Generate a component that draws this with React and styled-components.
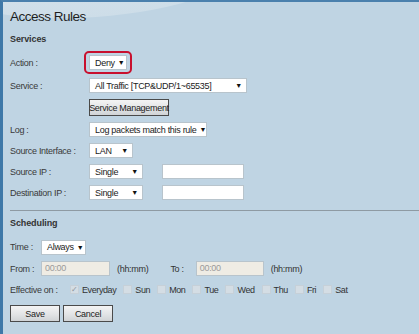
import styled, { createGlobalStyle } from 'styled-components'

const GlobalStyle = createGlobalStyle`
  html, body { margin: 0; padding: 0; }
  body {
    width: 419px;
    height: 334px;
    overflow: hidden;
    font-family: "Liberation Sans", Arial, sans-serif;
  }
`

const Page = styled.div`
  position: relative;
  width: 419px;
  height: 334px;
  box-sizing: border-box;
  background: #bfd4e3;
  border-left: 3px solid #3e78a8;
  border-top: 2px solid #4a80ad;
  padding: 0 0 0 7px;
  overflow: hidden;
  color: #333;
  letter-spacing: -0.3px;
  &::before {
    content: '';
    position: absolute;
    left: -60px;
    top: -70px;
    width: 300px;
    height: 85px;
    border-radius: 50%;
    background: linear-gradient(180deg, #dbe7ef 0%, #cddde8 100%);
    transform: rotate(-4deg);
  }
`

const Content = styled.div`
  position: relative;
`

const Title = styled.h1`
  margin: 0;
  padding-top: 7px;
  height: 20px;
  font-size: 13.5px;
  font-weight: normal;
  color: #1e1e1e;
  letter-spacing: -0.5px;
`

const SectionHead = styled.div`
  font-size: 9px;
  font-weight: bold;
  color: #333;
  letter-spacing: -0.1px;
  height: ${(p) => p.h}px;
  line-height: ${(p) => p.h}px;
`

const Row = styled.div`
  display: flex;
  align-items: center;
  height: ${(p) => p.h || 21}px;
  font-size: 9px;
  white-space: nowrap;
`

const Label = styled.div`
  width: ${(p) => p.w || 79}px;
  flex-shrink: 0;
  color: #3a3a3a;
`

const Select = styled.div`
  box-sizing: border-box;
  width: ${(p) => p.w}px;
  height: 15px;
  background: #fff;
  border: 1px solid #b8c4cc;
  display: flex;
  align-items: center;
  justify-content: space-between;
  padding: 0 4px 0 5px;
  font-size: 9px;
  color: #222;
  white-space: nowrap;
  overflow: hidden;
  &::after {
    content: '▼';
    font-size: 7px;
    color: #111;
    margin-left: 3px;
  }
`

const Highlight = styled.div`
  margin-left: -5px;
  padding: 2px 3px;
  border: 2px solid #c8102e;
  border-radius: 5px;
`

const TextInput = styled.div`
  box-sizing: border-box;
  width: ${(p) => p.w}px;
  height: 15px;
  margin-left: ${(p) => p.ml || 0}px;
  background: ${(p) => (p.disabled ? '#efece4' : '#fff')};
  border: 1px solid #b8c4cc;
  padding: 0 3px;
  font-size: 9px;
  line-height: 13px;
  color: #9a9a9a;
`

const Button = styled.div`
  box-sizing: border-box;
  width: ${(p) => p.w}px;
  height: ${(p) => p.h || 17}px;
  margin-right: ${(p) => p.mr || 0}px;
  border: 1px solid #4a4a4a;
  background: linear-gradient(180deg, #f4f4f4 0%, #e2e4e6 55%, #d0d3d6 100%);
  display: flex;
  align-items: center;
  justify-content: center;
  font-size: 9px;
  color: #222;
  white-space: nowrap;
`

const Separator = styled.div`
  height: 1px;
  background: #8e9aa3;
  margin-top: 7px;
`

const Note = styled.span`
  margin-left: ${(p) => p.ml}px;
  color: #333;
`

const Check = styled.span`
  box-sizing: border-box;
  display: inline-flex;
  align-items: center;
  justify-content: center;
  width: 9px;
  height: 9px;
  margin-left: ${(p) => p.ml}px;
  margin-right: 3px;
  background: #d4dde4;
  border: 1px solid #c6d0d8;
  font-size: 8px;
  line-height: 1;
  color: #8d979e;
`

const Day = styled.span`
  color: #333;
  letter-spacing: -0.4px;
`

const days = ['Sun', 'Mon', 'Tue', 'Wed', 'Thu', 'Fri', 'Sat']

export default function App() {
  return (
    <Page>
      <GlobalStyle />
      <Content>
        <Title>Access Rules</Title>
        <SectionHead h={21}>Services</SectionHead>

        <Row h={25}>
          <Label>Action :</Label>
          <Highlight>
            <Select w={38}>Deny</Select>
          </Highlight>
        </Row>
        <Row>
          <Label>Service :</Label>
          <Select w={158}>All Traffic [TCP&amp;UDP/1~65535]</Select>
        </Row>
        <Row h={23}>
          <Label />
          <Button w={80} h={17}>Service Management</Button>
        </Row>
        <Row>
          <Label>Log :</Label>
          <Select w={118}>Log packets match this rule</Select>
        </Row>
        <Row>
          <Label>Source Interface :</Label>
          <Select w={44}>LAN</Select>
        </Row>
        <Row>
          <Label>Source IP :</Label>
          <Select w={54}>Single</Select>
          <TextInput w={82} ml={19} />
        </Row>
        <Row>
          <Label>Destination IP :</Label>
          <Select w={54}>Single</Select>
          <TextInput w={82} ml={19} />
        </Row>

        <Separator />
        <SectionHead h={25}>Scheduling</SectionHead>

        <Row h={22}>
          <Label w={31}>Time :</Label>
          <Select w={45}>Always</Select>
        </Row>
        <Row>
          <Label w={31}>From :</Label>
          <TextInput w={69} disabled>00:00</TextInput>
          <Note ml={7}>(hh:mm)</Note>
          <Note ml={22}>To :</Note>
          <TextInput w={68} ml={12} disabled>00:00</TextInput>
          <Note ml={7}>(hh:mm)</Note>
        </Row>
        <Row h={21}>
          <Label w={60}>Effective on :</Label>
          <Check ml={0}>✓</Check>
          <Day>Everyday</Day>
          {days.map((d) => (
            <span key={d} style={{ display: 'contents' }}>
              <Check ml={7} />
              <Day>{d}</Day>
            </span>
          ))}
        </Row>
        <Row h={27}>
          <Button w={50} mr={3}>Save</Button>
          <Button w={50}>Cancel</Button>
        </Row>
      </Content>
    </Page>
  )
}
